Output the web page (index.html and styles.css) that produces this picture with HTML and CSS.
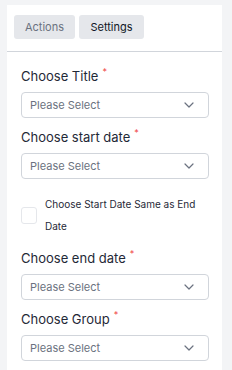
FILE: index.html
```html
<!DOCTYPE html>
<html>
<head>
<meta charset="utf-8">
<link rel="stylesheet" href="styles.css">
</head>
<body>
<div class="panel">
  <div class="tabs">
    <button class="tab tab-muted">Actions</button>
    <button class="tab tab-active">Settings</button>
  </div>
  <form class="form">
    <div class="field">
      <label class="label">Choose Title<span class="req">*</span></label>
      <div class="select"><span>Please Select</span><svg class="chev" viewBox="0 0 10 6" width="10" height="6"><path d="M1 1l4 4 4-4" fill="none" stroke="#6b7280" stroke-width="1.2" stroke-linecap="round" stroke-linejoin="round"/></svg></div>
    </div>
    <div class="field">
      <label class="label">Choose start date<span class="req">*</span></label>
      <div class="select"><span>Please Select</span><svg class="chev" viewBox="0 0 10 6" width="10" height="6"><path d="M1 1l4 4 4-4" fill="none" stroke="#6b7280" stroke-width="1.2" stroke-linecap="round" stroke-linejoin="round"/></svg></div>
    </div>
    <div class="check-row">
      <span class="checkbox"></span>
      <span class="check-text">Choose Start Date Same as End Date</span>
    </div>
    <div class="field field-after-check">
      <label class="label">Choose end date<span class="req">*</span></label>
      <div class="select"><span>Please Select</span><svg class="chev" viewBox="0 0 10 6" width="10" height="6"><path d="M1 1l4 4 4-4" fill="none" stroke="#6b7280" stroke-width="1.2" stroke-linecap="round" stroke-linejoin="round"/></svg></div>
    </div>
    <div class="field">
      <label class="label">Choose Group<span class="req">*</span></label>
      <div class="select"><span>Please Select</span><svg class="chev" viewBox="0 0 10 6" width="10" height="6"><path d="M1 1l4 4 4-4" fill="none" stroke="#6b7280" stroke-width="1.2" stroke-linecap="round" stroke-linejoin="round"/></svg></div>
    </div>
  </form>
</div>
</body>
</html>
```
FILE: styles.css
```css
html, body {
  margin: 0;
  padding: 0;
  background: #f3f4f6;
  font-family: Inter, "Noto Sans", sans-serif;
  height: 100%;
  overflow: hidden;
}
body {
  padding: 5px 10px 0 7px;
  box-sizing: border-box;
}
.panel {
  background: #fff;
  height: 100%;
}
.tabs {
  display: flex;
  gap: 4px;
  padding: 10px 7px 12px;
  border-bottom: 1px solid #d1d5db;
}
.tab {
  border: 0;
  border-radius: 3px;
  background: #e5e7eb;
  font-family: inherit;
  font-size: 11px;
  height: 24px;
  padding: 0;
  line-height: 24px;
}
.tab-muted { color: #6b7280; width: 61px; }
.tab-active { color: #111827; width: 65px; }
.form {
  padding: 5px 13px 0 14px;
}
.field {
  margin-top: 9px;
}
.field-after-check {
  margin-top: 11px;
}
.label {
  display: block;
  font-size: 13px;
  line-height: 20px;
  color: #1f2937;
  margin-bottom: 6px;
}
.req {
  color: #ef4444;
  font-size: 9px;
  vertical-align: top;
  line-height: 12px;
  margin-left: 4px;
}
.select {
  height: 26px;
  box-sizing: border-box;
  border: 1px solid #d1d5db;
  border-radius: 4px;
  display: flex;
  align-items: center;
  justify-content: space-between;
  padding: 0 14px 0 8px;
  font-size: 11px;
  color: #6b7280;
}
.check-row {
  display: flex;
  align-items: center;
  gap: 8px;
  margin-top: 14px;
}
.checkbox {
  flex: none;
  width: 16px;
  height: 17px;
  border: 1px solid #e5e7eb;
  border-radius: 3px;
  box-sizing: border-box;
}
.check-text {
  font-size: 10px;
  line-height: 22px;
  color: #1f2937;
}
```
